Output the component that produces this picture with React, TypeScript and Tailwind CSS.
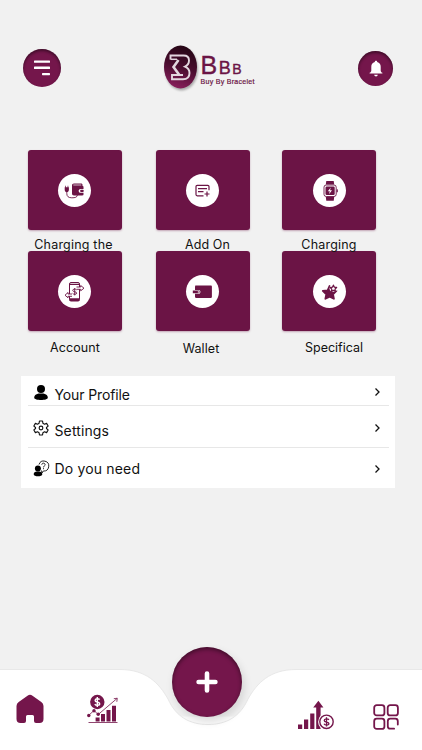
import React from 'react';

type IconProps = { className?: string };

const MenuIcon: React.FC<IconProps> = ({ className }) => (
  <svg viewBox="0 0 18 18" className={className} fill="#fff">
    <rect x="1" y="1.4" width="16" height="2.4" rx="0.6" />
    <rect x="1" y="7.4" width="16" height="2.6" rx="0.6" />
    <rect x="9" y="14" width="8" height="2.2" rx="0.6" />
  </svg>
);

const BellIcon: React.FC<IconProps> = ({ className }) => (
  <svg viewBox="0 0 14 18" className={className} fill="#fff">
    <path d="M7 .8c.8 0 1.200.5 1.200 1.200 2.400.6 3.500 2.400 3.500 4.800v3.600c0 1 .5 1.800 1.700 2.400v.8H.6v-.8c1.200-.6 1.700-1.400 1.700-2.400V6.800c0-2.400 1.100-4.200 3.500-4.800C5.800 1.300 6.200.8 7 .8z" />
    <path d="M5.200 14.800h3.600c-.2 1-.9 1.700-1.800 1.700s-1.600-.7-1.800-1.700z" />
  </svg>
);

const Logo = () => (
  <div className="flex h-[46px] w-[94px]">
    <svg viewBox="0 0 36 46" className="h-[46px] w-9 shrink-0 drop-shadow-[1px_2px_1px_rgba(0,0,0,0.3)]">
      <defs>
        <linearGradient id="logoFill" x1="0.6" y1="0" x2="0.35" y2="1">
          <stop offset="0" stopColor="#250615" />
          <stop offset="0.5" stopColor="#4a0d2f" />
          <stop offset="1" stopColor="#8a1f5d" />
        </linearGradient>
      </defs>
      <ellipse cx="17.5" cy="22" rx="16.5" ry="21.5" fill="url(#logoFill)" />
      <g fill="none" stroke="#e3d7df">
        <path d="M7.500 14.500V10.500H20.500c4 0 5.500 2.100 5.500 5 0 3-1.500 4.900-4 6.100 3 1.200 4.500 3.300 4.500 6.300 0 4-2.500 6.300-6.500 6.300H9v-4.200h11" strokeWidth="1.900" />
        <path d="M7.500 14.300h6.500" strokeWidth="1.500" />
        <path d="M15.500 15L10.500 22l5.500 7.500" strokeWidth="2.600" />
      </g>
    </svg>
    <div className="flex flex-col pl-[2px] pt-[9px] font-['Liberation_Sans'] leading-none text-[#6b1445]">
      <div className="flex h-[21px] items-baseline gap-[1.5px] [-webkit-text-stroke:0.4px_#6b1445]">
        <span className="text-[25px] leading-[22px]">B</span>
        <span className="text-[18px]">B</span>
        <span className="text-[14px]">B</span>
      </div>
      <span className="mt-[3px] whitespace-nowrap text-[7px] tracking-[0.3px] [-webkit-text-stroke:0.2px_#6b1445]">Buy By Bracelet</span>
    </div>
  </div>
);

const PlugWalletIcon = () => (
  <svg viewBox="0 0 33 33" className="size-full" fill="#6b1445">
    <path d="M14 11.500c0-1.200.7-2 2-2h7c1 0 1.500.5 1.500 1.500v1c.7 0 1 .4 1 1V15h-2.800c-2.700 0-2.700 3.800 0 3.800h2.800v1.400c0 .8-.4 1.200-1.200 1.200H16c-1.300 0-2-.8-2-2z" />
    <path d="M15.300 11h8" stroke="#fff" strokeWidth=".7" />
    <rect x="22.200" y="15.700" width="3.500" height="2.300" rx=".8" />
    <path d="M6.700 13.300h4.200v2.200c0 1.500-.7 2.200-1.300 2.500H8c-.7-.3-1.300-1-1.300-2.500zM7.300 11.800h.7v2h-.7zM9.600 11.800h.7v2h-.7z" />
    <path d="M8.800 17.500v2c0 2.800 1.500 4.300 5 4.300 3.300 0 5.400-.4 5.700-3" fill="none" stroke="#6b1445" strokeWidth=".9" />
  </svg>
);

const AddNoteIcon = () => (
  <svg viewBox="0 0 33 33" className="size-full" fill="none" stroke="#6b1445" strokeWidth="1.200">
    <path d="M17.500 21.800h-6.300c-.8 0-1.200-.4-1.200-1.200v-8c0-.8.400-1.200 1.200-1.200h10.600c.8 0 1.200.4 1.200 1.200v3.600M12 14.700h9M12 17.700h5.500M18.500 20h5M21 17.500v5" />
  </svg>
);

const WatchIcon = () => (
  <svg viewBox="0 0 33 33" className="size-full" fill="#6b1445">
    <path d="M13.300 7h7.400l.5 3.500h-8.400zM12.800 23h8.400l-.5 3.800h-7.400z" />
    <rect x="11" y="11" width="12.200" height="11.500" rx="2.200" fill="#fff" stroke="#6b1445" strokeWidth=".9" />
    <rect x="12.500" y="12.500" width="9.200" height="8.500" rx="1.200" />
    <rect x="23.600" y="15.300" width="1.200" height="3" rx=".5" />
    <path d="M17.800 13.500l-3 3.800h2l-.8 3 3-4h-2z" fill="#fff" />
  </svg>
);

const PhoneTransferIcon = () => (
  <svg viewBox="0 0 33 33" className="size-full">
    <rect x="11.500" y="7.500" width="10" height="18.500" rx="1.500" fill="#fff" stroke="#6b1445" strokeWidth="1" />
    <path d="M11.500 23.200h10v1.800c0 .7-.4 1-1 1h-8c-.6 0-1-.3-1-1zM11.500 8.800h10v1.300h-10z" fill="#6b1445" />
    <path d="M18.500 12h4.200v-1.500l3.300 2.700-3.300 2.600v-1.500h-4.200M14 19h-4v-1.500l-3 2.700 3 2.600v-1.500h4" fill="#fff" stroke="#6b1445" strokeWidth=".9" />
    <path d="M18.500 14.800c-.8-1-3.800-1-3.800.6 0 1.800 4 .9 4 2.700 0 1.600-3.300 1.500-4.100.3M16.700 13v7.400" fill="none" stroke="#6b1445" strokeWidth=".9" />
  </svg>
);

const WalletIcon = () => (
  <svg viewBox="0 0 33 33" className="size-full" fill="#6b1445">
    <path d="M9.300 10.500h15.400c.8 0 1.200.4 1.200 1.200v10c0 .8-.4 1.200-1.200 1.200H10.200c-.8 0-1.200-.4-1.200-1.200v-10z" />
    <path d="M9 15h3.500c2.600 0 2.600 3.800 0 3.800H9z" fill="#fff" />
    <path d="M6.800 15.600h5.500c1.800 0 1.800 2.600 0 2.600H6.800z" />
    <circle cx="12.400" cy="16.900" r=".7" fill="#fff" />
  </svg>
);

const StarsIcon = () => (
  <svg viewBox="0 0 33 33" className="size-full" fill="#6b1445" strokeLinejoin="round">
    <path d="M16.600 11l2.100 4.300 4.700.6-3.400 3.400.9 4.500-4.200-2.200-4.300 2.200.9-4.500-3.500-3.400 4.800-.6z" stroke="#6b1445" strokeWidth="1.800" />
    <circle cx="20.400" cy="13.300" r="3.800" fill="#fff" />
    <path d="M20.400 10.200l1 2 2.200.3-1.600 1.600.4 2.200-2-1-2 1 .4-2.200-1.600-1.600 2.200-.3z" fill="#fff" stroke="#6b1445" strokeWidth="1.300" />
  </svg>
);

const tiles = [
  { label: 'Charging the', icon: PlugWalletIcon, text: '-ml-[2px] tracking-[0.2px]' },
  { label: 'Add On', icon: AddNoteIcon, text: 'pl-[10px] tracking-[0.1px]' },
  { label: 'Charging', icon: WatchIcon, text: 'tracking-[0.2px]' },
  { label: 'Account', icon: PhoneTransferIcon, text: 'pl-px pt-[2px] tracking-[0.1px]' },
  { label: 'Wallet', icon: WalletIcon, text: 'pt-[3px] pr-[3px] tracking-[0.1px]' },
  { label: 'Specifical', icon: StarsIcon, text: 'pl-[10px] pt-[2px]' },
];

const ProfileIcon = () => (
  <svg viewBox="0 0 16 18" className="h-[18px] w-4" fill="#000">
    <circle cx="8" cy="5" r="4" />
    <path d="M5.500 9.500h5c3 .7 4.300 2 4.300 4.200 0 3-13.600 3-13.600 0 0-2.200 1.300-3.500 4.300-4.200z" />
  </svg>
);

const SettingsIcon = () => (
  <svg viewBox="0 0 24 24" className="size-4" fill="none" stroke="#111" strokeWidth="1.700" strokeLinejoin="round">
    <path d="M9.700 1.500h4.600l.6 3.500 2.300 1.300 3.200-1.200 2.300 4-2.500 2.200v1.400l2.500 2.200-2.300 4-3.200-1.200-2.300 1.300-.6 3.500H9.700L9.100 19l-2.300-1.300-3.200 1.200-2.300-4 2.500-2.200v-1.400L1.300 9.100l2.300-4 3.200 1.200L9.100 5z" />
    <circle cx="12" cy="12" r="2.800" />
  </svg>
);

const HelpIcon = () => (
  <svg viewBox="0 0 17 18" className="h-[18px] w-[17px]">
    <path d="M6 4.500A5 5 0 1 1 10.300 11l-1.300 2-.5-2.500" fill="none" stroke="#111" strokeWidth=".9" />
    <path d="M8.800 4.700c0-2.100 3.300-2 3.300 0 0 1.300-1.600 1.300-1.600 2.700M10.500 8.200v1" fill="none" stroke="#111" strokeWidth=".9" />
    <circle cx="4.900" cy="8.600" r="3" fill="#000" />
    <path d="M.7 14.200c0-2 1.500-2.800 3-2.800h2.600c1.500 0 3 .8 3 2.800 0 2.700-8.600 2.700-8.600 0z" fill="#000" />
  </svg>
);

const rows = [
  { label: 'Your Profile', icon: ProfileIcon, row: 'h-[30px] border-b', iconPos: 'pt-[5px]', text: 'pt-[9px] tracking-[-0.13px]', chevron: 'pt-[3px]' },
  { label: 'Settings', icon: SettingsIcon, row: 'h-[42px] border-b', iconPos: 'pt-[3px]', text: 'pt-[9px] tracking-[0.12px]', chevron: 'pt-[3px]' },
  { label: 'Do you need', icon: HelpIcon, row: 'h-10', iconPos: 'pt-[2px]', text: 'pt-[2px] tracking-[0.17px]', chevron: 'pt-[2px]' },
];

const HomeIcon = () => (
  <svg viewBox="0 0 28 30" className="h-[30px] w-7" fill="#74164b">
    <path d="M11.500 1.700q2.500-1.700 5 0l8.800 6.200Q27.500 9.500 27.500 12v13q0 4-4 4H20q-2 0-2-2v-4.500q0-1.500-1.500-1.500h-5q-1.500 0-1.500 1.500V27q0 2-2 2H4.500q-4 0-4-4V12q0-2.500 2.200-4.100z" />
  </svg>
);

const GrowthIcon = () => (
  <svg viewBox="0 0 32 32" className="size-8" fill="#74164b">
    <circle cx="10.300" cy="9" r="7.200" />
    <path d="M12.600 6.700c-.8-1.300-4.500-1.400-4.500.7 0 2.300 4.600 1 4.600 3.400 0 2-3.900 2-4.900.3M10.300 4v10" fill="none" stroke="#fff" strokeWidth="1.400" />
    <path d="M8.600 24.500h4v4h-4zM14 21h4v7.500h-4zM19.500 17h4v11.500h-4zM25 12.800h4v15.700h-4z" />
    <path d="M1.500 29.500h29M1.500 22.500l5.500-5 4.200 4L30 5.500M26.800 5.700l3.500-.5-.5 3.600" fill="none" stroke="#74164b" strokeWidth=".8" />
    <circle cx="1.800" cy="22.500" r="1.700" />
    <circle cx="7" cy="17.700" r="1.700" />
    <circle cx="11.200" cy="21.300" r="1.700" />
  </svg>
);

const ProfitIcon = () => (
  <svg viewBox="0 0 38 31" className="h-[31px] w-[38px]" fill="#74164b">
    <path d="M1 24.500h4.200V29H1zM7 19.500h4.200V29H7zM13.200 13.500h4.200V29h-4.200zM19.200 29V7.500h-3L21.400.8l5 6.700h-2.800V29z" />
    <circle cx="29.500" cy="21.800" r="8.400" fill="#fff" />
    <circle cx="29.500" cy="21.800" r="6.700" fill="#fff" stroke="#74164b" strokeWidth="1.400" />
    <path d="M31.900 19.900c-.8-1.500-4.700-1.500-4.700.5 0 2.300 4.700 1 4.700 3.200 0 2-4 2-4.900.2M29.500 17.200v9.200" fill="none" stroke="#74164b" strokeWidth="1.300" />
  </svg>
);

const CategoriesIcon = () => (
  <svg viewBox="0 0 26 26" className="size-[26px]" fill="none" stroke="#74164b" strokeWidth="1.800" strokeLinecap="round">
    <rect x="1.200" y="1.200" width="10.200" height="10.200" rx="2.500" />
    <rect x="14.700" y="1.200" width="10.200" height="10.200" rx="2.500" />
    <rect x="1.200" y="14.700" width="10.200" height="10.200" rx="2.500" />
    <path d="M24.800 20.500v-3.300q0-2.500-2.500-2.500h-5q-2.500 0-2.500 2.500v5q0 2.500 2.500 2.500h3.800" />
  </svg>
);

const App: React.FC = () => {
  return (
    <div className="flex h-[750px] w-[422px] flex-col overflow-hidden bg-[#f1f1f1] font-['Inter',sans-serif] text-[#111]">
      <header className="flex h-[118px] items-start justify-between pl-[23px] pr-[29px] pt-[45px]">
        <button className="mt-[4px] flex size-[38px] items-center justify-center rounded-full bg-[#74164b] shadow-[inset_0_2px_3px_rgba(0,0,0,0.45)]">
          <MenuIcon className="size-[18px]" />
        </button>
        <Logo />
        <button className="mt-[6px] flex size-[35px] items-center justify-center rounded-full bg-[#74164b] shadow-[inset_0_2px_3px_rgba(0,0,0,0.45)]">
          <BellIcon className="h-[18px] w-[14px]" />
        </button>
      </header>

      <main className="flex flex-1 flex-col">
        <section className="mt-8 grid grid-cols-[128px_126.5px_94px] pl-[27.5px]">
          {tiles.map(({ label, icon: Icon, text }) => (
            <div key={label} className="flex h-[101px] w-[94px] flex-col">
              <div className="flex h-20 shrink-0 items-center justify-center rounded-[3px] bg-[#6b1445] shadow-[0_1px_2px_rgba(107,20,69,0.35)]">
                <div className="size-[33px] rounded-full bg-white">
                  <Icon />
                </div>
              </div>
              <div className={`z-10 mt-[6px] whitespace-nowrap text-center text-[12.5px] leading-[18px] ${text}`}>{label}</div>
            </div>
          ))}
        </section>

        {/* Account links */}
        <section className="ml-[21px] mt-6 h-28 w-[374px] bg-white pl-[7px] pr-[6px]">
          {rows.map(({ label, icon: Icon, row, iconPos, text, chevron }) => (
            <div key={label} className={`flex items-center border-[#e7e7e7] pl-[2px] pr-2 ${row}`}>
              <div className={`mr-[2px] flex w-[22.5px] shrink-0 justify-center ${iconPos}`}>
                <Icon />
              </div>
              <span className={`whitespace-nowrap text-[14px] leading-5 ${text}`}>{label}</span>
              <svg viewBox="0 0 8 10" className={`ml-auto box-content h-[10px] w-2 ${chevron}`} fill="none" stroke="#111" strokeWidth="1.300">
                <path d="M2.500 1.500L6 5 2.500 8.500" />
              </svg>
            </div>
          ))}
        </section>
      </main>

      <nav className="relative flex h-[110px] shrink-0 items-start">
        {/* Bar with the notch cut out for the action button */}
        <svg viewBox="0 0 422 110" className="absolute inset-0 h-[110px] w-[422px]">
          <path d="M-2 29.500H120C146 29.500 159 43 168 59C176 77 190 84.500 208 84.500S240 77 248 59C257 43 270 29.500 296 29.500H424V112H-2z" fill="#fff" stroke="#e8e8e8" strokeWidth="1" />
          <path d="M182 76.500H234Q223 84 208 84T182 76.500z" fill="#fafafa" />
        </svg>
        <div className="relative flex w-full items-start">
          <div className="ml-[15.5px] mt-[54px]"><HomeIcon /></div>
          <div className="ml-[43px] mt-[53px]"><GrowthIcon /></div>
          <button className="ml-[53.5px] mt-[6.5px] flex size-[70px] items-center justify-center rounded-full bg-[#74164b] shadow-[inset_0_2px_4px_rgba(0,0,0,0.45),2px_4px_8px_rgba(0,0,0,0.13)]">
            <svg viewBox="0 0 22 22" className="size-[22px]" stroke="#fff" strokeWidth="4.600" strokeLinecap="round">
              <path d="M2.600 11h16.800M11 2.600v16.800" />
            </svg>
          </button>
          <div className="ml-[54.5px] mt-[60px]"><ProfitIcon /></div>
          <div className="ml-[38px] mt-[63.5px]"><CategoriesIcon /></div>
        </div>
      </nav>
    </div>
  );
};

export default App;
